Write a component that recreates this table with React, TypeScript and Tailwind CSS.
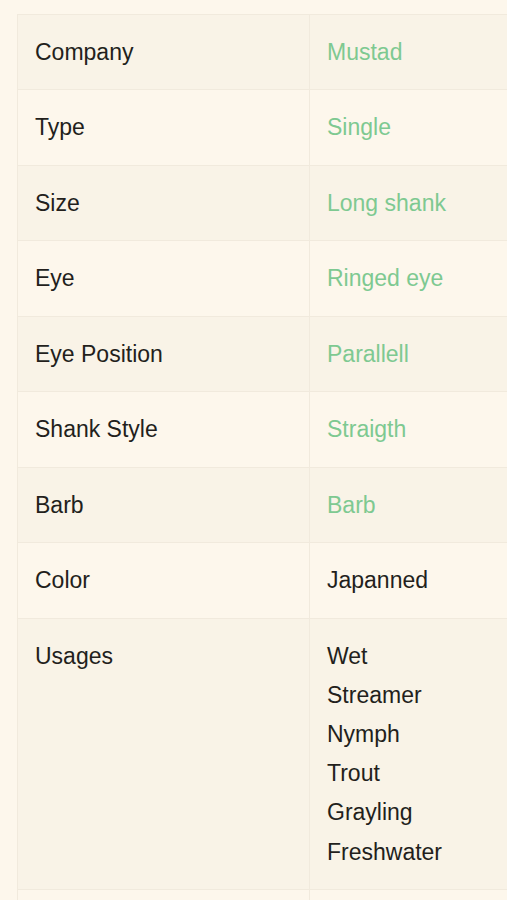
import React from "react";

const rows: { label: string; value: string[]; link?: boolean }[] = [
  { label: "Company", value: ["Mustad"], link: true },
  { label: "Type", value: ["Single"], link: true },
  { label: "Size", value: ["Long shank"], link: true },
  { label: "Eye", value: ["Ringed eye"], link: true },
  { label: "Eye Position", value: ["Parallell"], link: true },
  { label: "Shank Style", value: ["Straigth"], link: true },
  { label: "Barb", value: ["Barb"], link: true },
  { label: "Color", value: ["Japanned"] },
  { label: "Usages", value: ["Wet", "Streamer", "Nymph", "Trout", "Grayling", "Freshwater"] },
  { label: "\u00a0", value: ["\u00a0"] },
];

export default function App() {
  return (
    <div
      className="h-[900px] w-[507px] overflow-hidden bg-[#fdf7ec] pl-[17px] pt-[14px]"
      style={{ fontFamily: '"Liberation Sans", Arial, Helvetica, sans-serif' }}
    >
      <div className="w-[620px] border-t border-l border-[#f1eadd] text-[23px] leading-[39.2px] text-[#231f1c]">
        {rows.map((r, i) => (
          <div
            key={i}
            className={`flex border-b border-[#f1eadd] ${i % 2 === 0 ? "bg-[#f9f3e7]" : "bg-[#fdf7ec]"}`}
          >
            <div className="w-[292px] shrink-0 border-r border-[#f1eadd] py-[17.65px] pl-[17px]">
              {r.label}
            </div>
            <div className="flex-1 py-[17.65px] pl-[17px]">
              {r.value.map((v, j) => (
                <div key={j} className={r.link ? "text-[#7ec991]" : ""}>
                  {v}
                </div>
              ))}
            </div>
          </div>
        ))}
      </div>
    </div>
  );
}
